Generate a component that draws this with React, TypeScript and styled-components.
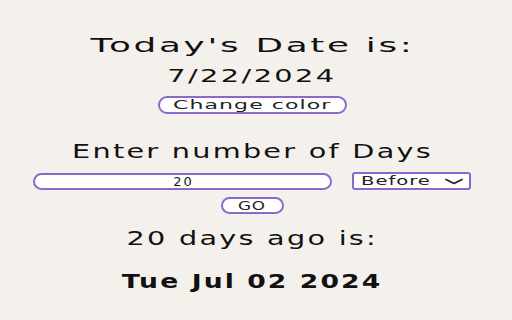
import React, { useState } from "react";
import styled, { createGlobalStyle } from "styled-components";

const GlobalStyle = createGlobalStyle`
  body {
    margin: 0;
    background-color: #f4f1ed;
    font-family: "DejaVu Sans", "Noto Sans", sans-serif;
    color: #111;
  }
`;

const Page = styled.div`
  width: 512px;
  height: 320px;
  display: flex;
  flex-direction: column;
  align-items: center;
  padding: 34px 8px 0 0;
  box-sizing: border-box;
`;

// the screenshot is a wide, geometric face; stretch DejaVu to match it
const Stretch = styled.span<{ sx: number }>`
  display: inline-block;
  transform: scaleX(${(p) => p.sx});
  transform-origin: center;
`;

const Heading = styled.div<{ size: number; mt?: number; bold?: boolean }>`
  margin-top: ${(p) => p.mt ?? 0}px;
  font-size: ${(p) => p.size}px;
  font-weight: ${(p) => (p.bold ? 700 : 400)};
  letter-spacing: 1.5px;
  line-height: 22px;
  white-space: nowrap;
  text-align: center;
`;

const PillButton = styled.button<{ w: number; h: number; mt: number }>`
  margin-top: ${(p) => p.mt}px;
  width: ${(p) => p.w}px;
  height: ${(p) => p.h}px;
  padding: 0;
  background: #fff;
  border: 2px solid #8d68cc;
  border-radius: 10px;
  font-family: inherit;
  font-size: 12px;
  line-height: 1;
  letter-spacing: 0.6px;
  color: #222;
  box-sizing: border-box;
`;

const Row = styled.div`
  align-self: flex-start;
  display: flex;
  align-items: center;
  gap: 20px;
  margin: 10px 0 0 33px;
`;

const NumInput = styled.input`
  width: 299px;
  height: 17px;
  box-sizing: border-box;
  border: 2px solid #8d68cc;
  border-radius: 9px;
  background: #fff;
  text-align: center;
  font-family: inherit;
  font-size: 13px;
  letter-spacing: 2px;
  color: #1a1a1a;
  outline: none;
  padding: 0 0 0 2px;
`;

const Select = styled.div`
  width: 119px;
  height: 18px;
  box-sizing: border-box;
  border: 2px solid #8d68cc;
  border-radius: 3px;
  background: #fff;
  display: flex;
  align-items: center;
  justify-content: space-between;
  padding: 0 5px 0 7px;
  font-size: 12px;
  letter-spacing: 0.6px;
  color: #222;
`;

const LeftStretch = styled(Stretch)`
  transform-origin: left center;
`;

export default function App() {
  const [days, setDays] = useState("20");
  return (
    <Page>
      <GlobalStyle />
      <Heading size={20}>
        <Stretch sx={1.79}>Today's Date is:</Stretch>
      </Heading>
      <Heading size={18} mt={9}>
        <Stretch sx={1.6}>7/22/2024</Stretch>
      </Heading>
      <PillButton w={189} h={18} mt={9}>
        <Stretch sx={1.83}>Change color</Stretch>
      </PillButton>
      <Heading size={19} mt={26}>
        <Stretch sx={1.51}>Enter number of Days</Stretch>
      </Heading>
      <Row>
        <NumInput value={days} onChange={(e) => setDays(e.target.value)} />
        <Select>
          <LeftStretch sx={1.63}>Before</LeftStretch>
          <svg width="20" height="7" viewBox="0 0 20 7">
            <path d="M2 1.5l8 4 8-4" fill="none" stroke="#222" strokeWidth="1.7" strokeLinecap="round" strokeLinejoin="round" />
          </svg>
        </Select>
      </Row>
      <PillButton w={63} h={17} mt={7}>
        <Stretch sx={1.4}>GO</Stretch>
      </PillButton>
      <Heading size={19} mt={13}>
        <Stretch sx={1.51}>20 days ago is:</Stretch>
      </Heading>
      <Heading size={19} mt={21} bold>
        <Stretch sx={1.4}>Tue Jul 02 2024</Stretch>
      </Heading>
    </Page>
  );
}
